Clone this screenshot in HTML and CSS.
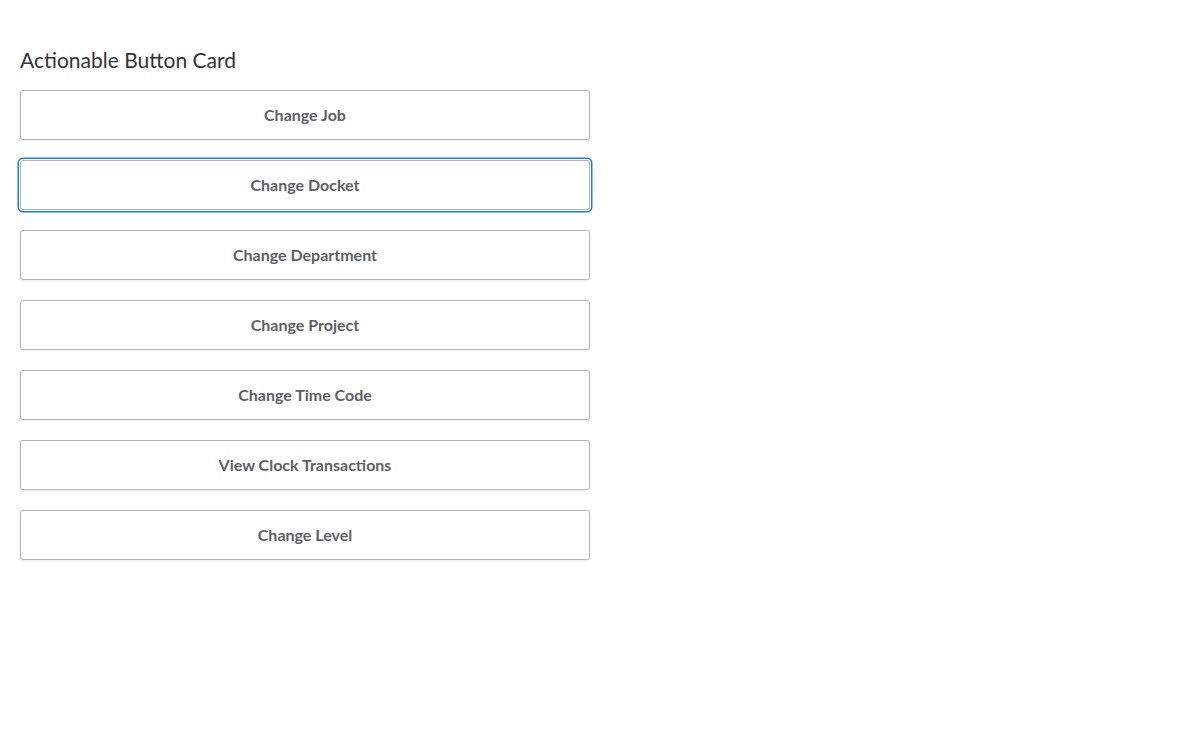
FILE: index.html
```html
<!DOCTYPE html>
<html lang="en">
<head>
<meta charset="utf-8">
<title>Actionable Button Card</title>
<link rel="stylesheet" href="styles.css">
</head>
<body>
<main class="page">
  <h1 class="title">Actionable Button Card</h1>
  <div class="button-list">
    <button class="action-btn">Change Job</button>
    <button class="action-btn is-focused">Change Docket</button>
    <button class="action-btn">Change Department</button>
    <button class="action-btn">Change Project</button>
    <button class="action-btn">Change Time Code</button>
    <button class="action-btn">View Clock Transactions</button>
    <button class="action-btn">Change Level</button>
  </div>
</main>
</body>
</html>
```

FILE: styles.css
```css
html, body {
  margin: 0;
  padding: 0;
  background: #ffffff;
}

body {
  font-family: "Lato", "Liberation Sans", sans-serif;
  color: #333333;
}

.page {
  padding: 45px 20px 20px 20px;
  width: 570px;
}

.title {
  margin: 0 0 15px 0;
  font-size: 21px;
  font-weight: 400;
  line-height: 30px;
  color: #333333;
}

.button-list {
  display: flex;
  flex-direction: column;
  gap: 20px;
}

.action-btn {
  display: block;
  width: 570px;
  height: 50px;
  margin: 0;
  padding: 0 0 1px 0;
  background: #ffffff;
  border: 1px solid #b5b5b5;
  border-radius: 3px;
  box-shadow: 0 1px 3px rgba(0, 0, 0, 0.08);
  font-family: "Lato", "Liberation Sans", sans-serif;
  font-size: 16px;
  font-weight: 700;
  color: #5e5f66;
  text-align: center;
  cursor: pointer;
}

.action-btn.is-focused {
  outline: none;
  box-shadow: 0 0 0 1px #ffffff, 0 0 0 2.5px #1a7ae8;
}
```
